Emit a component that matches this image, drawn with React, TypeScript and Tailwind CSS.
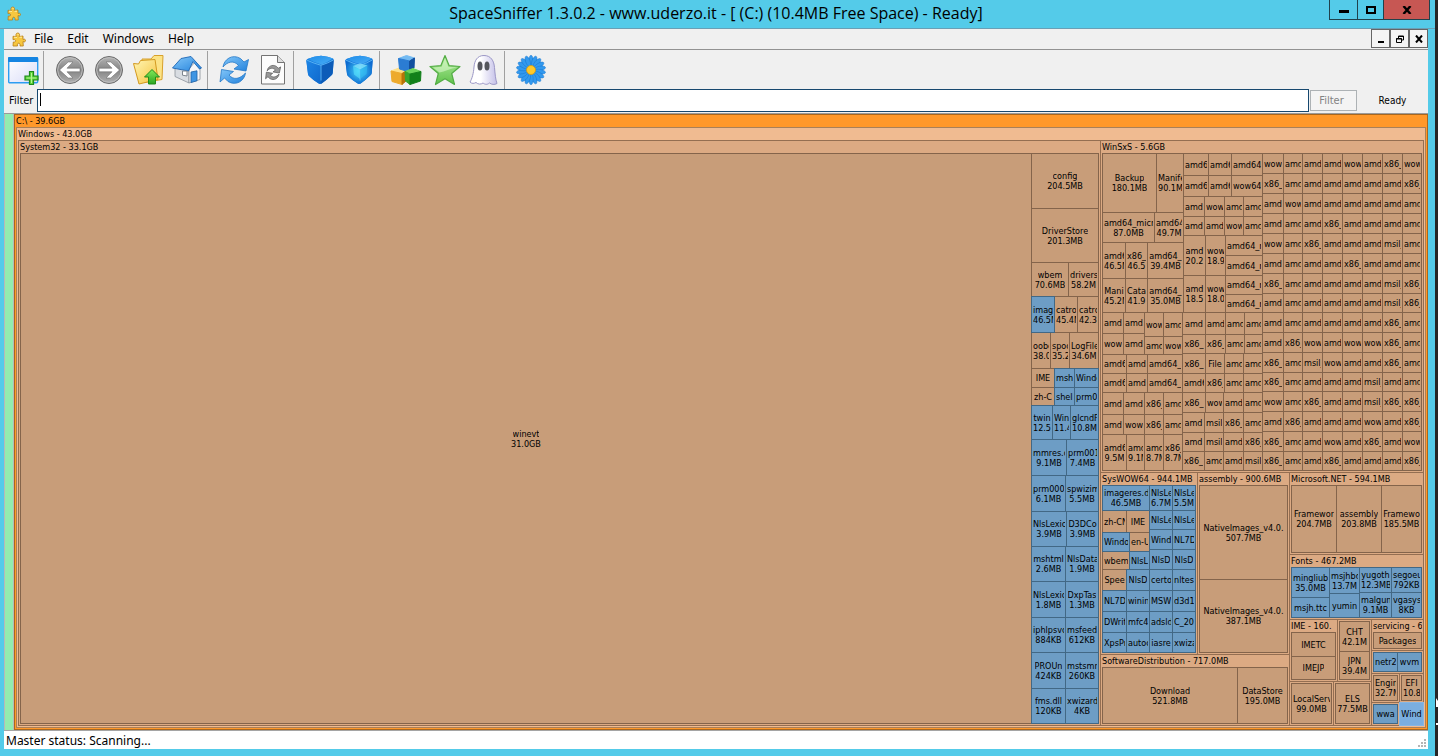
import type { ReactNode } from "react"
import { clsx } from "clsx"

type Tint = "folder" | "file" | "active"

type Block =
  | { kind: "leaf"; span: number; name: string; size?: string; tint: Tint }
  | { kind: "split"; span: number; dir: "row" | "col"; items: Block[] }
  | { kind: "group"; span: number; title?: string; body: Block }

const dir = (span: number, name: string, size?: string): Block => ({ kind: "leaf", span, name, size, tint: "folder" })
const file = (span: number, name: string, size?: string): Block => ({ kind: "leaf", span, name, size, tint: "file" })
const row = (span: number, ...items: Block[]): Block => ({ kind: "split", span, dir: "row", items })
const col = (span: number, ...items: Block[]): Block => ({ kind: "split", span, dir: "col", items })
const group = (span: number, title: string | undefined, body: Block): Block => ({ kind: "group", span, title, body })

// row of small folders, names separated by spaces
const names = (span: number, list: string, spans: number[]): Block =>
  row(span, ...list.split(" ").map((name, i) => dir(spans[i], name)))

const system32 = group(1082, "System32 - 33.1GB", row(1,
  dir(1011, "winevt", "31.0GB"),
  col(67,
    dir(55, "config", "204.5MB"),
    dir(54, "DriverStore", "201.3MB"),
    row(34, dir(37, "wbem", "70.6MB"), dir(30, "drivers", "58.2M")),
    row(36, file(23, "imag", "46.5M"), dir(23, "catro", "45.4M"), dir(21, "catro", "42.3")),
    row(36, dir(19, "oobe", "38.0"), dir(19, "spoo", "35.2"), dir(29, "LogFile", "34.6M")),
    row(19, dir(23, "IME"), file(20, "msh"), file(24, "Windo")),
    row(18, dir(23, "zh-C"), file(20, "shell"), file(24, "prm0")),
    row(34, file(21, "twin", "12.5"), file(18, "Win", "11.4"), file(28, "glcndF", "10.8M")),
    row(36, file(35, "mmres.d", "9.1MB"), file(32, "prm001", "7.4MB")),
    row(36, file(34, "prm000", "6.1MB"), file(33, "spwizim", "5.5MB")),
    row(35, file(35, "NlsLexic", "3.9MB"), file(32, "D3DCo", "3.9MB")),
    row(35, file(34, "mshtml", "2.6MB"), file(33, "NlsData", "1.9MB")),
    row(36, file(34, "NlsLexic", "1.8MB"), file(33, "DxpTas", "1.3MB")),
    row(35, file(34, "iphlpsvc", "884KB"), file(33, "msfeed", "612KB")),
    row(36, file(34, "PROUn", "424KB"), file(33, "mstsmr", "260KB")),
    row(35, file(34, "fms.dll", "120KB"), file(33, "xwizard", "4KB")),
  ),
))

const smallCols = [21, 19, 20, 20, 20, 20, 20, 19]
const smallRows = [20, 20, 20, 20, 20, 20, 20, 19, 20, 20, 20, 19, 20, 20, 20, 19]
const winsxsSmall = [
  "wow amd amd amd wow amd x86_ wow",
  "x86_ amd amd amd amd amd amd x86_",
  "amd wow amd amd amd amd amd amd",
  "amd amd amd x86_ amd amd amd amd",
  "wow amd x86_ amd amd amd msil_ amd",
  "amd amd amd amd x86_ amd amd amd",
  "x86_ amd amd amd amd amd msil_ x86_",
  "amd amd amd amd amd amd msil_ x86_",
  "amd amd amd amd amd amd x86_ amd",
  "amd x86_ wow amd wow wow x86_ amd",
  "x86_ amd msil_ wow amd amd x86_ amd",
  "x86_ amd amd amd amd msil_ amd amd",
  "wow amd x86_ amd amd msil_ x86_ x86_",
  "amd x86_ amd amd amd wow amd x86_",
  "x86_ amd amd wow amd x86_ amd wow",
  "x86_ amd amd x86_ amd amd amd x86_",
]

const winsxs = group(332, "WinSxS - 5.6GB", row(1,
  col(160,
    row(159,
      col(81,
        row(59, dir(54, "Backup", "180.1MB"), dir(27, "Manife", "90.1M")),
        row(30, dir(52, "amd64_micr", "87.0MB"), dir(29, "amd64", "49.7M")),
        row(36, dir(23, "amd6", "46.5M"), dir(22, "x86_", "46.5"), dir(36, "amd64_", "39.4MB")),
        row(34, dir(23, "Mani", "45.2M"), dir(22, "Cata", "41.9"), dir(36, "amd64_", "35.0MB")),
      ),
      col(79,
        names(22, "amd6 amd6 amd64", [25, 23, 31]),
        names(21, "amd6 amd6 wow64", [25, 23, 31]),
        names(20, "amd wow amd amd", [21, 20, 19, 19]),
        names(19, "amd amd wow amd", [21, 20, 19, 19]),
        row(77,
          col(22, dir(40, "amd", "20.2"), dir(37, "amd", "18.5")),
          col(20, dir(40, "wow", "18.9"), dir(37, "wow", "18.0")),
          col(37, dir(20, "amd64_r"), dir(20, "amd64_r"), dir(19, "amd64_r"), dir(18, "amd64_r")),
        ),
      ),
    ),
    row(158,
      col(80,
        row(42,
          col(42, names(21, "amd amd", [21, 21]), names(21, "wow amd", [21, 21])),
          col(38, names(24, "wow amd", [19, 19]), names(18, "amd wow", [19, 19])),
        ),
        names(19, "amd6 amd amd64_", [24, 21, 35]),
        names(19, "amd6 amd amd64_", [24, 21, 35]),
        names(22, "amd amd x86_ amd", [21, 21, 19, 19]),
        names(20, "amd wow x86_ amd", [21, 21, 19, 19]),
        row(36, dir(24, "amd6", "9.5M"), dir(18, "amd", "9.1M"), dir(19, "amd", "8.7M"), dir(19, "x86_", "8.7M")),
      ),
      col(80,
        names(22, "amd amd amd amd", [23, 20, 19, 18]),
        names(19, "x86_ x86_ amd amd", [23, 20, 19, 18]),
        names(20, "x86_ File amd amd", [23, 19, 19, 19]),
        names(19, "amd6 x86_ amd amd", [23, 19, 19, 19]),
        names(20, "x86_ wow amd amd", [23, 18, 20, 19]),
        names(20, "amd msil x86_ amd", [22, 19, 20, 19]),
        names(19, "amd msil amd x86_", [22, 19, 20, 19]),
        names(19, "x86_ amd amd msil", [22, 19, 20, 19]),
      ),
    ),
  ),
  col(159, ...winsxsSmall.map((line, i) => names(smallRows[i], line, smallCols))),
))

const syswow = group(97, "SysWOW64 - 944.1MB", row(1,
  col(47,
    file(25, "imageres.d", "46.5MB"),
    row(22, dir(24, "zh-CN"), dir(23, "IME")),
    row(19, file(27, "Windo"), dir(20, "en-U")),
    row(18, dir(27, "wbem"), file(20, "NlsL")),
    row(21, dir(24, "Spee"), file(23, "NlsD")),
    row(21, file(24, "NL7D"), file(23, "winin")),
    row(21, file(24, "DWrit"), file(23, "mfc4")),
    row(20, file(24, "XpsPr"), file(23, "autoc")),
  ),
  col(23,
    file(25, "NlsLe", "6.7M"), file(19, "NlsLe"), file(20, "Wind"), file(20, "NlsD"),
    file(21, "certo"), file(21, "MSW"), file(21, "adsld"), file(20, "iasre"),
  ),
  col(23,
    file(25, "NlsLe", "5.5M"), file(19, "NlsLe"), file(20, "NL7D"), file(20, "NlsD"),
    file(21, "nltes"), file(21, "d3d1"), file(21, "C_20"), file(20, "xwiza"),
  ),
))

const tail = row(106,
  col(82,
    row(62,
      group(48, "IME - 160.", col(1, dir(24, "IMETC"), dir(23, "IMEJP"))),
      group(34, undefined, col(1, dir(30, "CHT", "42.1M"), dir(28, "JPN", "39.4M"))),
    ),
    row(44,
      group(44, undefined, dir(1, "LocalServ", "99.0MB")),
      group(38, undefined, dir(1, "ELS", "77.5MB")),
    ),
  ),
  col(52,
    group(31, "servicing - 6", dir(1, "Packages")),
    group(23, undefined, row(1, file(24, "netr2"), file(24, "wvm"))),
    row(29,
      group(28, undefined, dir(1, "Engin", "32.7M")),
      group(24, undefined, dir(1, "EFI", "10.8")),
    ),
    row(23,
      group(28, undefined, file(1, "wwa")),
      { kind: "leaf", span: 24, name: "Wind", tint: "active" },
    ),
  ),
)

const windows = group(1, "Windows - 43.0GB", row(1,
  system32,
  col(323,
    winsxs,
    row(253,
      col(189,
        row(182,
          syswow,
          group(92, "assembly - 900.6MB", col(1,
            dir(94, "NativeImages_v4.0.", "507.7MB"),
            dir(73, "NativeImages_v4.0.", "387.1MB"),
          )),
        ),
        group(71, "SoftwareDistribution - 717.0MB", row(1, dir(135, "Download", "521.8MB"), dir(50, "DataStore", "195.0MB"))),
      ),
      col(134,
        group(82, "Microsoft.NET - 594.1MB", row(1,
          dir(45, "Framewor", "204.7MB"), dir(45, "assembly", "203.8MB"), dir(40, "Framewo", "185.5MB"),
        )),
        group(65, "Fonts - 467.2MB", row(1,
          col(38, file(30, "mingliub", "35.0MB"), file(20, "msjh.ttc")),
          col(30, file(26, "msjhbd", "13.7M"), file(24, "yumin")),
          col(32, file(25, "yugoth", "12.3MB"), file(25, "malgun", "9.1MB")),
          col(30, file(25, "segoeu", "792KB"), file(25, "vgasys", "8KB")),
        )),
        tail,
      ),
    ),
  ),
))

const tints: Record<Tint, string> = {
  folder: "bg-[#c89d79] border-[#84644b]",
  file: "relative bg-[#6d9dc5] border-[#426885]",
  active: "relative bg-[#7aaee0] border-[#86b6e4]",
}

const groupTints = [
  "bg-[#ff982a] border-[#a8671f]",
  "bg-[#f0bb91] border-[#a98058]",
  "bg-[#dcaa83] border-[#946e51]",
]

function BlockView({ block, depth }: { block: Block; depth: number }) {
  if (block.kind === "leaf") {
    return (
      <div className={clsx("-ml-px -mt-px flex min-w-0 flex-col justify-center overflow-hidden border px-px", tints[block.tint])}>
        <span className="mx-auto block max-w-full overflow-hidden whitespace-nowrap">{block.name}</span>
        {block.size && <span className="mx-auto block max-w-full overflow-hidden whitespace-nowrap">{block.size}</span>}
      </div>
    )
  }
  if (block.kind === "split") {
    const tracks = block.items.map((item) => `minmax(0, ${item.span}fr)`).join(" ")
    return (
      <div
        className="grid min-h-0 min-w-0"
        style={block.dir === "row"
          ? { gridTemplateColumns: tracks, gridTemplateRows: "minmax(0, 1fr)" }
          : { gridTemplateRows: tracks, gridTemplateColumns: "minmax(0, 1fr)" }}
      >
        {block.items.map((item, i) => <BlockView key={i} block={item} depth={depth} />)}
      </div>
    )
  }
  return (
    <div className={clsx("-ml-px -mt-px flex min-h-0 min-w-0 flex-col border p-px", block.title && "pt-0", groupTints[depth])}>
      {block.title && <div className="h-3 shrink-0 overflow-hidden whitespace-nowrap pt-px">{block.title}</div>}
      <div className="grid min-h-0 flex-1 grid-cols-1 grid-rows-1 pl-px pt-px">
        <BlockView block={block.body} depth={depth + 1} />
      </div>
    </div>
  )
}

function Puzzle() {
  return (
    <svg viewBox="0 0 14 15" className="h-[15px] w-[14px]">
      <path d="M4.5 4.5c-1-1-.7-3.5 1.300-3.500s2.200 2.400 1.200 3.500L11 4v3.500c1.500-.8 2.500-.2 2.500 1 0 1.300-1 1.800-2.500 1l.3 4.500H8c.3-1.800-.2-2.800-1.300-2.800S5.100 12.300 5.500 14H1l.3-4c1.400.4 2.300-.2 2.300-1.200S2.500 7.300 1 7.700V4.300z" fill="#f7c73f" stroke="#b97d16" strokeWidth=".8" />
      <path d="M5.200 2.500c.4-.8 1.200-.6 1.200 0M2 5.200l3 .2M7.500 5.200H10" stroke="#fff0a8" fill="none" />
    </svg>
  )
}

function Icon({ children }: { children: ReactNode }) {
  return <svg viewBox="0 0 32 32" className="size-8">{children}</svg>
}

function NewIcon() {
  return (
    <Icon>
      <rect x="1.700" y="3.700" width="29" height="25" rx="1" fill="url(#pane)" stroke="#2c9df2" strokeWidth="1.400" />
      <rect x="1" y="3" width="30" height="5" rx="1" fill="#1585e2" />
      <path d="M22.500 17.500h4v4.500h4.500v4h-4.500v4.500h-4V26H18v-4h4.500z" fill="#5fd43c" stroke="#1d8a1a" strokeWidth="1.200" />
      <path d="M24.500 19v10M19.500 24h10" stroke="#b4f593" />
    </Icon>
  )
}

function ArrowIcon({ forward }: { forward?: boolean }) {
  return (
    <Icon>
      <circle cx="16" cy="16" r="13.500" fill="url(#disc)" stroke="#6b6b6b" />
      <circle cx="16" cy="16" r="12.300" fill="none" stroke="#bdbdbd" />
      <path
        d={forward ? "M6 14.200h13l-6-6.200h4.800l8.700 8-8.700 8H13l6-6.200H6z" : "M26 14.200H13l6-6.200h-4.800L5.500 16l8.700 8H19l-6-6.200h13z"}
        fill="#fff" stroke="#6f6f6f" strokeWidth=".6"
      />
    </Icon>
  )
}

function FolderUpIcon() {
  return (
    <Icon>
      <path d="M10 5h9l3-3.500h9l-1 24-18 3z" fill="#fce386" stroke="#d8a12b" />
      <path d="M1.500 9.500l5 .5 2-3.500L23 5.500l3 20-19 4.500z" fill="url(#folder)" stroke="#d3991f" />
      <path d="M20 15.500l7.500 7.500h-4v7h-7v-7h-4z" fill="url(#green)" stroke="#218b19" />
    </Icon>
  )
}

function HomeIcon() {
  return (
    <Icon>
      <path d="M4 14v8.500L18 29V15l-7-7z" fill="#d9dde2" stroke="#8b929a" strokeWidth=".8" />
      <path d="M18 15l6-7 5 6v11.500L18 29z" fill="#f5f6f8" stroke="#8b929a" strokeWidth=".8" />
      <path d="M1.500 14L10 4.500l10-2L30.500 14l-2 1-6.500-7.500L17.500 17z" fill="url(#roof)" stroke="#1e67b4" strokeWidth=".9" />
      <path d="M20 18l6-1.200v10L20 28.500z" fill="#3e95e3" stroke="#1c62a8" strokeWidth=".8" />
      <path d="M11.500 17h4.500v5l-4.500-.8z" fill="#fff" stroke="#7d858e" />
    </Icon>
  )
}

function Swirl() {
  return (
    <>
      <path d="M5 13C6 5.500 14-.5 22.500 4.500L26 8l4.500-2.500L28 17l-12-2 4.500-3.500C16 6 9.500 7.500 5 13z" />
      <path d="M27.500 19c-1 7.500-9 13.500-17.500 8.500L6.500 24 2 28l1.500-12.500 12 2L11 21c4.500 5.500 11 4 16.500-2z" />
    </>
  )
}

function RefreshIcon() {
  return <Icon><g fill="url(#roof)" stroke="#2377c6" strokeWidth=".8"><Swirl /></g></Icon>
}

function RefreshPageIcon() {
  return (
    <Icon>
      <path d="M4.500 1.500h16l7 7V30h-23z" fill="#fcfcfc" stroke="#737373" />
      <path d="M20.500 1.500v7h7" fill="#ddd" stroke="#737373" />
      <g transform="translate(7.500 10) scale(.53)" fill="#999" stroke="#555" strokeWidth="1.300"><Swirl /></g>
    </Icon>
  )
}

function CubeIcon({ lit }: { lit?: boolean }) {
  return (
    <Icon>
      <path d="M3.500 5Q10 2 17 1.800q7 .4 12 2.700.8.500.7 1.500l-1 13q-.2 1.500-1.500 2.500-4 4-9.700 8-1.500.8-3 0Q9 26 5.500 22.500 4.300 21.500 4 20L2.300 7q-.1-1.500 1.200-2z" fill="#1478dc" />
      <path d="M3.500 5Q10 2 17 1.800q7 .4 12 2.700-5 3.500-11.500 6Q10 8.500 3.500 5z" fill="url(#cubeTop)" />
      <path d="M2.400 6Q10 9.500 17 11.500l-.5 18.300q-1 0-2-.5Q9 26 5.500 22.500 4.300 21.500 4 20z" fill={lit ? "url(#glow)" : "url(#cubeLeft)"} />
      <path d="M29.700 6Q24 9.500 17 11.500l-.5 18.300q.6 0 1.200-.3 5.500-4 9.500-8 1.300-1 1.500-2.500z" fill={lit ? "url(#glow)" : "#0d5cb8"} />
      <path d="M3 6.200q7 3.200 14 5.100 7-2.200 12.300-5.300M17 11.500v15" stroke="#5db8f6" strokeWidth=".9" fill="none" />
      {lit && (
        <>
          <path d="M10 12l7-2.500 7.500 2-7.500 4z" fill="#8feafc" fillOpacity=".7" />
          <path d="M10 12l7 3.500V25l-6-4.500z" fill="#5ce2fb" fillOpacity=".6" />
          <path d="M24.500 11.500l-7.500 4V25l6.500-5z" fill="#34bdf2" fillOpacity=".6" />
        </>
      )}
    </Icon>
  )
}

function Brick({ x, y, top, left, right }: { x: number; y: number; top: string; left: string; right: string }) {
  return (
    <g transform={`translate(${x} ${y})`} strokeLinejoin="round">
      <path d="M0 2.500L8-.5l8 2.500-5 3z" fill={top} stroke={top} />
      <path d="M0 2.500l11 2.500v11L1 13z" fill={left} stroke={left} />
      <path d="M16 2l-5 3v11l4.500-4z" fill={right} stroke={right} />
    </g>
  )
}

function BlocksIcon() {
  return (
    <Icon>
      <Brick x={1} y={14.5} top="#ffe08a" left="#edaa2c" right="#b87308" />
      <Brick x={8.5} y={2} top="#73baf2" left="#2b7cd3" right="#124f9f" />
      <g transform="translate(32 15)" strokeLinejoin="round">
        <path d="M-1 2.500L-9-.5l-8 3 5 2.500z" fill="#6cd35c" stroke="#6cd35c" />
        <path d="M-17 2.500l5 2.500v10.500l-4.500-3.500z" fill="#35a52d" stroke="#35a52d" />
        <path d="M-1 2.500L-12 5v10.500L-1.500 12z" fill="#12801a" stroke="#12801a" />
      </g>
    </Icon>
  )
}

function StarIcon() {
  return (
    <Icon>
      <path d="M16 1.500l4.200 10.200L31 12.500l-8.300 7 2.800 11L16 24.700 6.500 30.500l2.800-11L1 12.500l10.800-.8z" fill="url(#star)" stroke="#54ad45" strokeWidth="1.200" strokeLinejoin="round" />
      <path d="M16 4.500l3.300 8.200 8.700.8c-7 1-12 4-17.500 5L4 13.500l8.700-.8z" fill="#e0fbd4" fillOpacity=".55" />
    </Icon>
  )
}

function GhostIcon() {
  return (
    <Icon>
      <path d="M16 1.500C9 1.500 6.500 7 6 13c-.4 6-2 12-4 15 2 2 4 1.500 6 .5 2 2 5 2 7 .5 2 1.500 4 2 6.500 0 2 1.500 5 2 7.500.5-1.500-4-2-10-2.500-16C26 7 23 1.500 16 1.500z" fill="url(#ghost)" stroke="#9b97c6" />
      <ellipse cx="12" cy="12" rx="2.500" ry="4.500" fill="#55565d" />
      <ellipse cx="19" cy="12" rx="2.500" ry="4.500" fill="#55565d" />
    </Icon>
  )
}

function FlowerIcon() {
  const petals = Array.from({ length: 18 }, (_, i) => i * 20)
  return (
    <Icon>
      <circle cx="16" cy="16" r="12" fill="#1686e0" />
      {petals.map((a) => (
        <ellipse key={a} cx="16" cy="6.800" rx="2.200" ry="5.500" fill="#3299ee" stroke="#1a78d0" strokeWidth=".5" transform={`rotate(${a} 16 16)`} />
      ))}
      <circle cx="16" cy="16" r="4.500" fill="#ffc928" stroke="#d29a17" strokeWidth=".8" />
    </Icon>
  )
}

function Gradients() {
  return (
    <svg className="absolute size-0" aria-hidden="true">
      <defs>
        <linearGradient id="pane" x2="1" y2="1"><stop stopColor="#fff" /><stop offset="1" stopColor="#d9dcf8" /></linearGradient>
        <linearGradient id="disc" x2="0" y2="1"><stop stopColor="#b5b5b5" /><stop offset=".5" stopColor="#858585" /><stop offset="1" stopColor="#b0b0b0" /></linearGradient>
        <linearGradient id="folder" x2="1" y2="1"><stop stopColor="#fff6b5" /><stop offset="1" stopColor="#f5c23c" /></linearGradient>
        <linearGradient id="green" x2="0" y2="1"><stop stopColor="#83ea5a" /><stop offset="1" stopColor="#2ba521" /></linearGradient>
        <linearGradient id="roof" x2="1" y2="1"><stop stopColor="#83c7f9" /><stop offset="1" stopColor="#2382dc" /></linearGradient>
        <linearGradient id="star" x2="0" y2="1"><stop stopColor="#b5ec9f" /><stop offset="1" stopColor="#5fc24b" /></linearGradient>
        <linearGradient id="ghost" x2="1" y2="0"><stop offset=".4" stopColor="#fff" /><stop offset="1" stopColor="#c3bfe8" /></linearGradient>
        <linearGradient id="cubeTop" x2="1" y2="1"><stop stopColor="#1e8cea" /><stop offset="1" stopColor="#49aef5" /></linearGradient>
        <linearGradient id="cubeLeft" x2="1" y2="1"><stop stopColor="#1e86e6" /><stop offset="1" stopColor="#0f68cc" /></linearGradient>
        <radialGradient id="glow" gradientUnits="userSpaceOnUse" cx="16" cy="17" r="14"><stop stopColor="#45d3fa" /><stop offset="1" stopColor="#0e6bd0" /></radialGradient>
      </defs>
    </svg>
  )
}

const tools: { label: string; icon: ReactNode }[][] = [
  [{ label: "New view", icon: <NewIcon /> }],
  [
    { label: "Back", icon: <ArrowIcon /> },
    { label: "Forward", icon: <ArrowIcon forward /> },
    { label: "Up", icon: <FolderUpIcon /> },
    { label: "Home", icon: <HomeIcon /> },
  ],
  [{ label: "Rescan", icon: <RefreshIcon /> }, { label: "Rescan element", icon: <RefreshPageIcon /> }],
  [{ label: "Less detail", icon: <CubeIcon /> }, { label: "More detail", icon: <CubeIcon lit /> }],
  [
    { label: "File classes", icon: <BlocksIcon /> },
    { label: "Tags", icon: <StarIcon /> },
    { label: "Free space", icon: <GhostIcon /> },
  ],
  [{ label: "Configure", icon: <FlowerIcon /> }],
]

function TitleBar() {
  return (
    <header className="flex h-[29px] shrink-0 items-start border-b border-[#6a9fb5]">
      <div className="pl-[7px] pt-[6px]"><Puzzle /></div>
      <h1 className="flex-1 pl-[82px] text-center font-['Open_Sans','Noto_Sans',sans-serif] text-[16px] leading-[27px]">
        SpaceSniffer 1.3.0.2 - www.uderzo.it - [ (C:) (10.4MB Free Space) - Ready]
      </h1>
      <div className="mr-[5px] flex h-5 border-x border-b border-[#20424c]">
        <button aria-label="Minimize" className="flex w-7 items-center justify-center border-r border-[#20424c]">
          <svg viewBox="0 0 10 10" className="size-[10px]"><path d="M0 5h10v3H0z" /></svg>
        </button>
        <button aria-label="Maximize" className="flex w-[26px] items-center justify-center border-r border-[#20424c]">
          <svg viewBox="0 0 10 8" className="h-2 w-[10px]"><path d="M1 1h8v6H1z" fill="none" stroke="#000" strokeWidth="2" /></svg>
        </button>
        <button aria-label="Close" className="flex w-[45px] items-center justify-center bg-[#c75753]">
          <svg viewBox="0 0 10 8" className="h-2 w-[10px]"><path d="M1.500 0l7 8M8.500 0l-7 8" stroke="#000" strokeWidth="2.400" /></svg>
        </button>
      </div>
    </header>
  )
}

function MenuBar() {
  const mdi = "flex w-[19px] items-center justify-center border border-[#666] bg-[#f4f4f4]"
  return (
    <nav className="flex h-[21px] shrink-0 items-center border-b border-[#929292] pl-2 text-[12px] leading-5">
      <Puzzle />
      {["File", "Edit", "Windows", "Help"].map((item) => (
        <button key={item} className="px-[7px] first-of-type:pl-2">{item}</button>
      ))}
      <div className="ml-auto flex h-[19px] self-start">
        <button aria-label="Minimize view" className={mdi}>
          <svg viewBox="0 0 8 8" className="size-2"><path d="M1 6h6v2H1z" /></svg>
        </button>
        <button aria-label="Restore view" className={mdi}>
          <svg viewBox="0 0 8 8" className="size-2"><path d="M2.500 3V1h5v4H5.500M.5 3.500h5v4h-5zM2 1.500h6M0 4h6" fill="none" stroke="#000" /></svg>
        </button>
        <button aria-label="Close view" className={mdi}>
          <svg viewBox="0 0 8 8" className="size-2"><path d="M1 .5l6 7M7 .5l-6 7" stroke="#000" strokeWidth="2" /></svg>
        </button>
      </div>
    </nav>
  )
}

export default function App() {
  return (
    <div className="flex h-screen overflow-hidden bg-[#262626] font-['Noto_Sans','Open_Sans',sans-serif] text-black">
      <Gradients />
      <div className="flex min-w-0 flex-1 flex-col bg-[#54cbe9] pb-[7px]">
        <TitleBar />
        <main className="ml-1 mr-[7px] flex min-h-0 flex-1 flex-col bg-[#f0f0f0]">
          <MenuBar />
          <div className="flex h-[39px] shrink-0 pt-px">
            {tools.map((set, i) => (
              <div key={i} className={clsx("flex", i > 0 && "border-l border-[#a0a0a0] pl-[7px]")}>
                {set.map((tool) => (
                  <button key={tool.label} aria-label={tool.label} className="flex w-[39px] items-center justify-center pr-px">{tool.icon}</button>
                ))}
              </div>
            ))}
          </div>
          <form className="flex h-[25px] shrink-0 border-b border-[#9a9a9a] font-['DejaVu_Sans_Condensed','DejaVu_Sans',sans-serif] text-[11px] leading-6" onSubmit={(e) => e.preventDefault()}>
            <label htmlFor="filter" className="w-[33px] pl-[5px]">Filter</label>
            <div className="relative flex min-w-0 flex-1">
              <input id="filter" className="h-[23px] min-w-0 flex-1 border border-[#17486f] bg-white px-1 outline-none" />
              <span className="absolute left-[3px] top-1 h-[13px] w-px bg-black" />
            </div>
            <button className="ml-px mt-px h-[21px] w-[47px] border border-[#adb2b5] bg-[#f4f4f4] pr-1 leading-5 text-[#838383]" disabled>Filter</button>
            <output className="w-[71px] text-center text-[10px]">Ready</output>
          </form>
          <div className="flex min-h-0 flex-1 font-['DejaVu_Sans_Condensed','DejaVu_Sans',sans-serif] text-[9px] leading-[10px]">
            <div className="w-[10px] border-x border-[#b8b8b8] bg-[#93ecae]" />
            <div className="grid min-h-0 min-w-0 flex-1 grid-cols-1 grid-rows-1 pl-px pt-px">
              <BlockView block={group(1, "C:\\ - 39.6GB", windows)} depth={0} />
            </div>
          </div>
          <footer className="flex h-[19px] shrink-0 items-center justify-between border-t border-[#a5a5a5] bg-white pl-[2px] pt-px text-[12px] leading-5">
            Master status: Scanning...
            <svg viewBox="0 0 10 10" className="size-[10px] self-end" fill="#b5b5b5">
              <path d="M6 0h2v2H6zM3 3h2v2H3zM6 3h2v2H6zM0 6h2v2H0zM3 6h2v2H3zM6 6h2v2H6z" />
            </svg>
          </footer>
        </main>
      </div>
      <div className="flex w-[3px] flex-col justify-end">
        <svg viewBox="0 0 3 60" className="h-[60px] w-[3px]" fill="#fff"><path d="M1 2l2 3v6H1zM1 27h2v2H1z" /></svg>
      </div>
    </div>
  )
}
